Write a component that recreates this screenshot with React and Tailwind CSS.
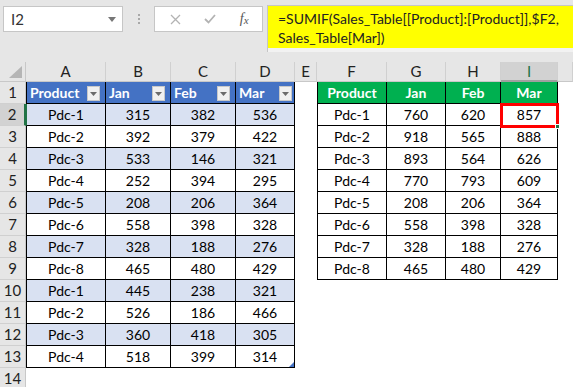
import React from "react";

const t1 = [
  ["Pdc-1", 315, 382, 536],
  ["Pdc-2", 392, 379, 422],
  ["Pdc-3", 533, 146, 321],
  ["Pdc-4", 252, 394, 295],
  ["Pdc-5", 208, 206, 364],
  ["Pdc-6", 558, 398, 328],
  ["Pdc-7", 328, 188, 276],
  ["Pdc-8", 465, 480, 429],
  ["Pdc-1", 445, 238, 321],
  ["Pdc-2", 526, 186, 466],
  ["Pdc-3", 360, 418, 305],
  ["Pdc-4", 518, 399, 314],
];
const t2 = [
  ["Pdc-1", 760, 620, 857],
  ["Pdc-2", 918, 565, 888],
  ["Pdc-3", 893, 564, 626],
  ["Pdc-4", 770, 793, 609],
  ["Pdc-5", 208, 206, 364],
  ["Pdc-6", 558, 398, 328],
  ["Pdc-7", 328, 188, 276],
  ["Pdc-8", 465, 480, 429],
];

const cols = ["A", "B", "C", "D", "E", "F", "G", "H", "I", ""];
const t1Heads = ["Product", "Jan", "Feb", "Mar"];
const t2Heads = ["Product", "Jan", "Feb", "Mar"];
const btnRight = ["right-[5px]", "right-[5px]", "right-[5px]", "right-[2px]"];

function DropBtn({ right }) {
  return (
    <div
      className={`absolute ${right} top-[4px] w-[13px] h-[15px] bg-[#f0f0f0] border border-[#c8c8c8] flex items-center justify-center`}
    >
      <svg width="7" height="4" viewBox="0 0 7 4">
        <path d="M0 0 L7 0 L3.5 4 Z" fill="#6b6b6b" />
      </svg>
    </div>
  );
}

function Cell({ r, c }) {
  if (c <= 3 && r <= 13) {
    const left = c === 0 ? "border-l" : "";
    if (r === 1) {
      return (
        <div
          className={`relative bg-[#4472c4] border-r border-b border-black ${left} text-white font-bold pl-[3px] flex items-center`}
        >
          {t1Heads[c]}
          <DropBtn right={btnRight[c]} />
        </div>
      );
    }
    const band = r % 2 === 0 ? "bg-[#d9e1f2]" : "bg-white";
    const leftCls =
      c === 0 ? (r === 2 ? "border-l border-l-[#217346]" : "border-l") : "";
    return (
      <div
        className={`relative ${band} border-r border-b border-black ${leftCls} flex items-center justify-center text-black`}
      >
        {t1[r - 2][c]}
        {c === 3 && r === 13 ? (
          <div className="absolute right-0 bottom-0 w-0 h-0 border-l-[5px] border-l-transparent border-b-[5px] border-b-[#4472c4]" />
        ) : null}
      </div>
    );
  }
  if (c >= 5 && c <= 8 && r <= 9) {
    const i = c - 5;
    const left = i === 0 ? "border-l" : "";
    if (r === 1) {
      return (
        <div
          className={`bg-[#00b050] border-r border-b border-black ${left} text-white font-bold flex items-center justify-center`}
        >
          {t2Heads[i]}
        </div>
      );
    }
    return (
      <div
        className={`bg-white border-r border-b border-black ${left} flex items-center justify-center text-black`}
      >
        {t2[r - 2][i]}
      </div>
    );
  }
  return <div className="bg-white" />;
}

export default function App() {
  const rows = Array.from({ length: 14 }, (_, i) => i + 1);
  return (
    <div
      className="w-[573px] h-[387px] overflow-hidden bg-[#e6e6e6] flex flex-col text-[14px]"
      style={{ fontFamily: "Lato, 'Open Sans', sans-serif" }}
    >
      {/* formula bar */}
      <div className="h-[62px] flex items-start pt-[5px] shrink-0">
        <div className="ml-[3px] mt-[1px] w-[120px] h-[26px] bg-white border border-[#c6c6c6] flex items-center justify-between pl-[7px] pr-[6px]">
          <span className="text-[15px] text-[#333]">I2</span>
          <svg width="8" height="5" viewBox="0 0 8 5">
            <path d="M0 0 L8 0 L4 5 Z" fill="#777" />
          </svg>
        </div>
        <div className="w-[31px] h-[26px] mt-[1px] flex flex-col items-center justify-center gap-[2px]">
          <div className="w-[2px] h-[2px] bg-[#a8a8a8]" />
          <div className="w-[2px] h-[2px] bg-[#a8a8a8]" />
          <div className="w-[2px] h-[2px] bg-[#a8a8a8]" />
        </div>
        <div className="mt-[1px] w-[109px] h-[26px] bg-white border border-[#c6c6c6] flex items-center">
          <div className="w-[36px] flex justify-center pl-[6px]">
            <svg width="11" height="11" viewBox="0 0 11 11">
              <path d="M1 1 L10 10 M10 1 L1 10" stroke="#b3b3b3" strokeWidth="1.3" />
            </svg>
          </div>
          <div className="w-[36px] flex justify-center pl-[3px]">
            <svg width="12" height="10" viewBox="0 0 12 10">
              <path d="M1 5 L4.5 8.5 L11 1" stroke="#b3b3b3" strokeWidth="1.8" fill="none" />
            </svg>
          </div>
          <div
            className="w-[36px] flex justify-center text-[#555] italic text-[14px] leading-none"
            style={{ fontFamily: "'Liberation Serif', serif" }}
          >
            <span>f</span>
            <span className="text-[11px] mt-[3px]">x</span>
          </div>
        </div>
        <div className="ml-[4px] flex-1 h-[47px] border-l border-t border-[#c6c6c6] bg-[#f2f2f2]">
          <div className="h-[42px] bg-[#ffff00] pl-[10px] pt-[3px] text-[14px] leading-[19px] text-[#222] whitespace-nowrap">
            <div>=SUMIF(Sales_Table[[Product]:[Product]],$F2,</div>
            <div>Sales_Table[Mar])</div>
          </div>
        </div>
      </div>

      {/* sheet */}
      <div className="relative grid grid-cols-[26px_80px_65px_65px_59px_22px_70px_59px_55px_57px_1fr] grid-rows-[20px_repeat(14,22px)] bg-white">
        <div className="bg-[#e6e6e6] border-r border-b border-[#c8c8c8] flex items-end justify-end pr-[3px] pb-[3px]">
          <svg width="13" height="12" viewBox="0 0 13 12">
            <path d="M13 0 L13 12 L0 12 Z" fill="#b5b5b5" />
          </svg>
        </div>
        {cols.map((c, i) => (
          <div
            key={"h" + i}
            className={`${
              c === "I"
                ? "bg-[#d2d2d2] border-b-2 border-b-[#a0a0a0] text-[#217346]"
                : "bg-[#e6e6e6] border-b border-b-[#c8c8c8] text-[#222]"
            } border-r border-r-[#d0d0d0] flex items-center justify-center text-[15px]`}
          >
            {c}
          </div>
        ))}
        {rows.map((r) => (
          <React.Fragment key={"r" + r}>
            <div
              className={`${
                r === 2 ? "bg-[#d2d2d2] border-r-2 border-r-[#217346]" : "bg-[#e6e6e6] border-r border-r-[#c8c8c8]"
              } border-b border-b-[#d0d0d0] flex items-center justify-center text-[15px] text-[#222]`}
            >
              {r}
            </div>
            {cols.map((c, ci) => (
              <Cell key={"c" + r + ci} r={r} c={ci} />
            ))}
          </React.Fragment>
        ))}
        <div className="absolute left-[500px] top-[41px] w-[59px] h-[25px] border-[3px] border-[#ff0000] pointer-events-none">
          <div className="absolute right-[-4px] bottom-[-4px] w-[5px] h-[5px] bg-[#217346] border border-white" />
        </div>
      </div>
    </div>
  );
}
